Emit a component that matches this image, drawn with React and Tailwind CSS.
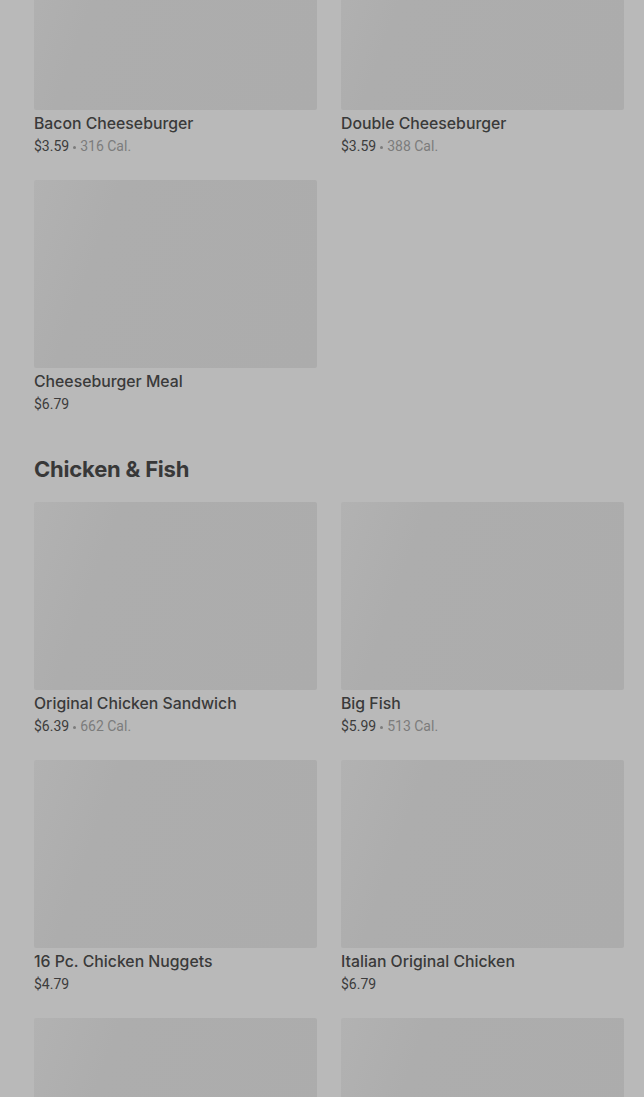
import React from 'react';

const font = { fontFamily: 'Roboto, "Noto Sans", sans-serif' };

const Card = ({ name, price, cal }) => (
  <div className="flex flex-col">
    <div className="h-[188px] rounded-[2px] bg-[linear-gradient(110deg,#b2b2b2_0%,#adadad_25%,#acacac_100%)]" />
    <div className="h-[70px] pt-[4px]">
      <h4
        className="text-[15.8px] leading-5 font-medium text-[#3a3a3a]"
        style={{ fontFamily: 'Inter, sans-serif' }}
      >
        {name}
      </h4>
      <p className="mt-[2px] text-[14px] leading-5 text-[#3c3c3c]">
        {price}
        {cal && (
          <span className="text-[#7c7c7c]">
            <span className="mx-[4px] inline-block h-[3px] w-[3px] rounded-full bg-current align-middle" />
            {cal}
          </span>
        )}
      </p>
    </div>
  </div>
);

const burgers = [
  { name: 'Bacon Cheeseburger', price: '$3.59', cal: '316 Cal.' },
  { name: 'Double Cheeseburger', price: '$3.59', cal: '388 Cal.' },
  { name: 'Cheeseburger Meal', price: '$6.79' },
];

const chicken = [
  { name: 'Original Chicken Sandwich', price: '$6.39', cal: '662 Cal.' },
  { name: 'Big Fish', price: '$5.99', cal: '513 Cal.' },
  { name: '16 Pc. Chicken Nuggets', price: '$4.79' },
  { name: 'Italian Original Chicken', price: '$6.79' },
  { name: ' ', price: ' ' },
  { name: ' ', price: ' ' },
];

const App = () => {
  return (
    <div className="h-[1097px] overflow-hidden bg-[#b9b9b9]" style={font}>
      <main className="-mt-[78px] pl-[34px] pr-5">
        <section className="grid grid-cols-2 gap-x-6">
          {burgers.map((b, i) => (
            <Card key={i} {...b} />
          ))}
        </section>

        <section>
          <h3
            className="mt-[15px] mb-[17px] text-[22px] leading-8 font-bold tracking-[-0.2px] text-[#383838]"
            style={{ fontFamily: 'Inter, sans-serif' }}
          >
            Chicken &amp; Fish
          </h3>
          <div className="grid grid-cols-2 gap-x-6">
            {chicken.map((b, i) => (
              <Card key={i} {...b} />
            ))}
          </div>
        </section>
      </main>
    </div>
  );
};

export default App;
